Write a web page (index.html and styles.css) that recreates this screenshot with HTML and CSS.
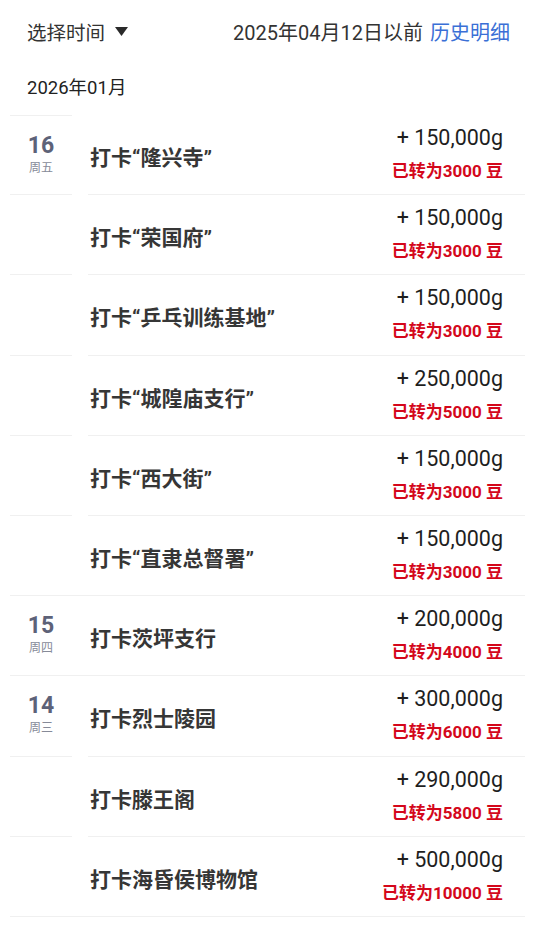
FILE: index.html
```html
<!DOCTYPE html>
<html lang="zh-CN">
<head>
	<meta charset="UTF-8">
	<title>打卡记录</title>
	<link rel="stylesheet" href="styles.css">
</head>
<body>
	<div class="topbar">
		<div class="picker">选择时间
			<svg class="caret" width="13" height="9" viewBox="0 0 13 9"><path d="M0 0H13L6.5 9Z" fill="#2a2a2a"/></svg>
		</div>
		<div class="before">2025年04月12日以前 <span class="link">历史明细</span></div>
	</div>
	<div class="month">2026年01月</div>

	<div class="list">
		<!-- 16日 -->
		<div class="row first">
			<div class="date"><b>16</b><span>周五</span></div>
			<div class="info">
				<div class="title">打卡“隆兴寺”</div>
				<div class="amount"><p class="gain">+ 150,000g</p><p class="bean">已转为3000 豆</p></div>
			</div>
		</div>
		<div class="row">
			<div class="date"></div>
			<div class="info">
				<div class="title">打卡“荣国府”</div>
				<div class="amount"><p class="gain">+ 150,000g</p><p class="bean">已转为3000 豆</p></div>
			</div>
		</div>
		<div class="row">
			<div class="date"></div>
			<div class="info">
				<div class="title">打卡“乒乓训练基地”</div>
				<div class="amount"><p class="gain">+ 150,000g</p><p class="bean">已转为3000 豆</p></div>
			</div>
		</div>
		<div class="row">
			<div class="date"></div>
			<div class="info">
				<div class="title">打卡“城隍庙支行”</div>
				<div class="amount"><p class="gain">+ 250,000g</p><p class="bean">已转为5000 豆</p></div>
			</div>
		</div>
		<div class="row">
			<div class="date"></div>
			<div class="info">
				<div class="title">打卡“西大街”</div>
				<div class="amount"><p class="gain">+ 150,000g</p><p class="bean">已转为3000 豆</p></div>
			</div>
		</div>
		<div class="row end">
			<div class="date"></div>
			<div class="info">
				<div class="title">打卡“直隶总督署”</div>
				<div class="amount"><p class="gain">+ 150,000g</p><p class="bean">已转为3000 豆</p></div>
			</div>
		</div>
		<!-- 15日 -->
		<div class="row end">
			<div class="date"><b>15</b><span>周四</span></div>
			<div class="info">
				<div class="title">打卡茨坪支行</div>
				<div class="amount"><p class="gain">+ 200,000g</p><p class="bean">已转为4000 豆</p></div>
			</div>
		</div>
		<!-- 14日 -->
		<div class="row">
			<div class="date"><b>14</b><span>周三</span></div>
			<div class="info">
				<div class="title">打卡烈士陵园</div>
				<div class="amount"><p class="gain">+ 300,000g</p><p class="bean">已转为6000 豆</p></div>
			</div>
		</div>
		<div class="row">
			<div class="date"></div>
			<div class="info">
				<div class="title">打卡滕王阁</div>
				<div class="amount"><p class="gain">+ 290,000g</p><p class="bean">已转为5800 豆</p></div>
			</div>
		</div>
		<div class="row end">
			<div class="date"></div>
			<div class="info">
				<div class="title">打卡海昏侯博物馆</div>
				<div class="amount"><p class="gain">+ 500,000g</p><p class="bean">已转为10000 豆</p></div>
			</div>
		</div>
	</div>
</body>
</html>
```

FILE: styles.css
```css
*{
	margin: 0;
	padding: 0;
	box-sizing: border-box;
}
body{
	background: #fff;
	font-family: Roboto, "Noto Sans CJK SC", sans-serif;
	color: #2a2a2a;
}
.topbar{
	height: 62px;
	padding: 0 30px 0 27px;
	display: flex;
	align-items: center;
	justify-content: space-between;
	font-size: 19.5px;
	color: #333;
}
.picker{
	display: flex;
	align-items: center;
	gap: 10px;
}
.before{
	font-size: 20px;
}
.link{
	color: #3a6fd6;
	margin-left: 2px;
}
.month{
	height: 53px;
	line-height: 52px;
	padding-left: 27px;
	font-size: 18.5px;
	color: #222;
}
.row{
	display: flex;
	height: 80.2px;
	gap: 16px;
}
.date{
	width: 62px;
	margin-left: 10px;
	border-bottom: 1px solid #f0f0f0;
	display: flex;
	flex-direction: column;
	align-items: center;
	padding-top: 16px;
}
.row.first .date{
	border-top: 1px solid #f0f0f0;
}
.date b{
	font-size: 23px;
	line-height: 28px;
	font-weight: bold;
	color: #5d6278;
}
.date span{
	font-size: 12px;
	line-height: 16px;
	color: #868a98;
}
.info{
	flex: 1;
	margin-right: 15px;
	border-bottom: 1px solid #f0f0f0;
	display: flex;
	justify-content: space-between;
	align-items: flex-start;
	padding: 0 22px 0 2px;
}
.row.end{
	border-bottom: 1px solid #f0f0f0;
	margin: 0 15px 0 10px;
	gap: 16px;
}
.row.end .date{
	margin-left: 0;
	border-bottom: none;
}
.row.end .info{
	margin-right: 0;
	border-bottom: none;
}
.title{
	font-size: 21px;
	font-weight: bold;
	color: #363636;
	line-height: 28px;
	padding-top: 29px;
}
.amount{
	text-align: right;
	padding-top: 10px;
}
.gain{
	font-size: 21.5px;
	line-height: 26px;
	color: #1e1e1e;
}
.bean{
	font-size: 17px;
	line-height: 24px;
	margin-top: 8px;
	font-weight: bold;
	color: #d4071b;
}
```
